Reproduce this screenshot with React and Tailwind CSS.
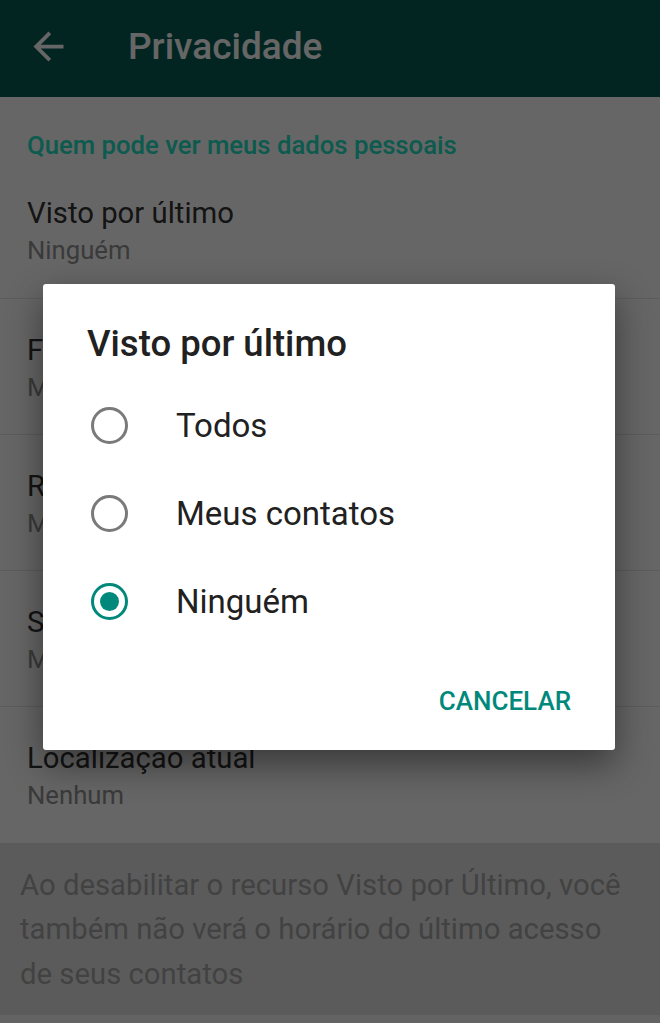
import React from "react";

function Item({ title, sub, first, last }) {
  return (
    <div
      className={
        "flex flex-col px-[27px] " +
        (first ? "h-[140px] pt-[40px] " : "h-[136px] pt-[37px] ") +
        (last ? "" : "border-b border-[#e6e6e6]")
      }
    >
      <div className="text-[29.3px] leading-none text-[#333333] whitespace-nowrap">{title}</div>
      <div className="mt-[10px] text-[25.7px] leading-none text-[#929292] whitespace-nowrap">{sub}</div>
    </div>
  );
}

function Radio({ checked, label }) {
  return (
    <div className="h-[88px] flex items-center pl-[48px]">
      <div
        className={
          "w-[37px] h-[37px] rounded-full border-[3.5px] flex items-center justify-center shrink-0 " +
          (checked ? "border-[#00897b]" : "border-[#7a7a7a]")
        }
      >
        {checked && <div className="w-[19px] h-[19px] rounded-full bg-[#00897b]" />}
      </div>
      <div className="ml-[48px] text-[33px] leading-none text-[#212121]">{label}</div>
    </div>
  );
}

export default function App() {
  return (
    <div className="relative w-[660px] h-[1023px] overflow-hidden bg-[#f7f7f7] font-['Roboto',sans-serif]">
      <div className="h-[97px] bg-[#075e54] flex items-center pl-[26px] pb-[4px]">
        <svg width="45" height="45" viewBox="0 0 24 24" fill="#ffffff" className="shrink-0">
          <path d="M20 11H7.83l5.59-5.59L12 4l-8 8 8 8 1.41-1.41L7.83 13H20v-2z" />
        </svg>
        <div className="ml-[57px] text-[37px] leading-none font-medium text-white">Privacidade</div>
      </div>
      <div className="bg-white">
        <div className="pt-[36px] px-[27px] text-[25.7px] leading-none font-medium text-[#21e0c4] whitespace-nowrap">
          Quem pode ver meus dados pessoais
        </div>
        <Item first title="Visto por último" sub="Ninguém" />
        <Item title="Foto do perfil" sub="Meus contatos" />
        <Item title="Recado" sub="Meus contatos" />
        <Item title="Status" sub="Meus contatos" />
        <Item last title="Localização atual" sub="Nenhum" />
      </div>
      <div className="h-[172px] bg-[#e4e4e4] pt-[20px] pl-[20px] pr-[20px] text-[29.3px] leading-[44.5px] text-[#a6a6a6]">
        Ao desabilitar o recurso Visto por Último, você também não verá o horário do último acesso de seus contatos
      </div>

      <div className="absolute inset-0 bg-black/60" />

      <div className="absolute left-[43px] top-[284px] w-[572px] h-[466px] bg-white rounded-[3px] shadow-[0_14px_36px_rgba(0,0,0,0.45)] flex flex-col">
        <div className="pt-[42px] pl-[44px] text-[36.5px] leading-none font-medium text-[#212121]">Visto por último</div>
        <div className="mt-[19px] flex flex-col">
          <Radio label="Todos" />
          <Radio label="Meus contatos" />
          <Radio checked label="Ninguém" />
        </div>
        <div className="mt-[42px] flex justify-end pr-[44px]">
          <div className="text-[26px] leading-none font-medium text-[#00897b]">CANCELAR</div>
        </div>
      </div>
    </div>
  );
}
